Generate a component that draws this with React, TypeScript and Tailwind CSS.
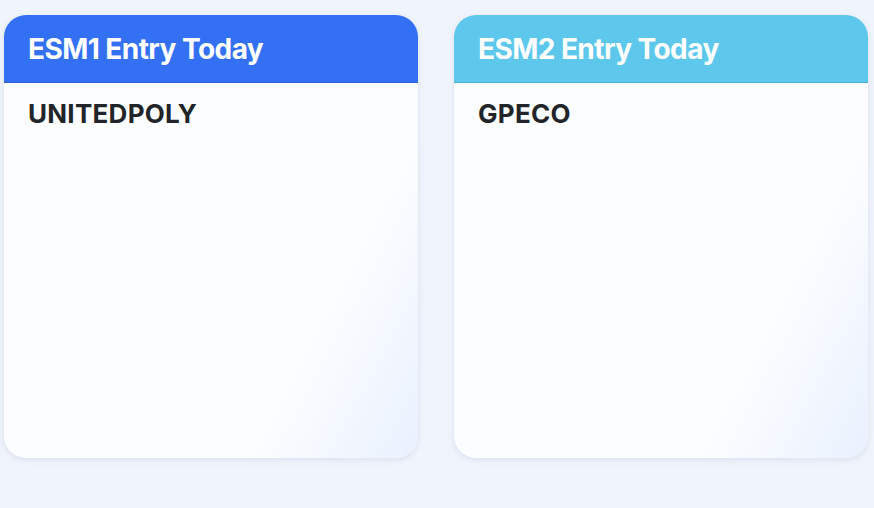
import React from "react";

type EntryCardProps = {
  title: string;
  items: string[];
  headerClass: string;
};

const EntryCard: React.FC<EntryCardProps> = ({ title, items, headerClass }) => {
  return (
    <div className="flex flex-col w-[414px] h-[443px] rounded-[22px] overflow-hidden bg-[#fcfdff] shadow-[0_2px_6px_rgba(30,60,120,0.10)]">
      <div className={`h-[68px] flex items-center px-6 ${headerClass}`}>
        <h2 className="text-[28px] font-bold text-white tracking-[-0.02em]">
          {title}
        </h2>
      </div>
      <div className="flex-1 px-6 pt-[13px] bg-[linear-gradient(118deg,rgba(252,253,255,0)_72%,#e9f1fe_100%)]">
        {items.map((item) => (
          <p key={item} className="text-[26px] font-bold text-[#212529] leading-[36px] tracking-[0.01em]">
            {item}
          </p>
        ))}
      </div>
    </div>
  );
};

export default function App() {
  return (
    <div
      className="w-[874px] h-[508px] bg-[#f0f4fc] px-1 pt-[15px] flex gap-9"
      style={{ fontFamily: "Inter, 'Noto Sans', sans-serif" }}
    >
      <EntryCard
        title="ESM1 Entry Today"
        items={["UNITEDPOLY"]}
        headerClass="bg-[#3470f4] border-b border-[#2a5fd6]"
      />
      <EntryCard
        title="ESM2 Entry Today"
        items={["GPECO"]}
        headerClass="bg-[#5ec8ec] border-b border-[#4aaed2]"
      />
    </div>
  );
}
